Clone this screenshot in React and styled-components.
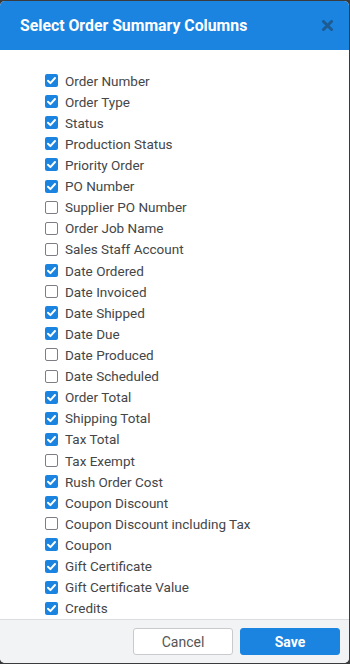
import React, { useState } from "react";
import styled, { createGlobalStyle } from "styled-components";

const colors = {
  backdrop: "#3a3b3c",
  primary: "#1a84e0",
  closeIcon: "#1d5b93",
  text: "#444648",
  border: "#7d7d85",
  footer: "#f2f3f5",
  line: "#dcdde0",
};

const columns = [
  ["Order Number", true],
  ["Order Type", true],
  ["Status", true],
  ["Production Status", true],
  ["Priority Order", true],
  ["PO Number", true],
  ["Supplier PO Number", false],
  ["Order Job Name", false],
  ["Sales Staff Account", false],
  ["Date Ordered", true],
  ["Date Invoiced", false],
  ["Date Shipped", true],
  ["Date Due", true],
  ["Date Produced", false],
  ["Date Scheduled", false],
  ["Order Total", true],
  ["Shipping Total", true],
  ["Tax Total", true],
  ["Tax Exempt", false],
  ["Rush Order Cost", true],
  ["Coupon Discount", true],
  ["Coupon Discount including Tax", false],
  ["Coupon", true],
  ["Gift Certificate", true],
  ["Gift Certificate Value", true],
  ["Credits", true],
];

const GlobalStyle = createGlobalStyle`
  html, body {
    margin: 0;
    padding: 0;
    background: ${colors.backdrop};
    font-family: Roboto, "Liberation Sans", sans-serif;
  }
`;

const App = () => {
  const [checked, setChecked] = useState(columns.map(([, on]) => on));

  const toggle = (i) =>
    setChecked((prev) => prev.map((v, j) => (j === i ? !v : v)));

  return (
    <>
      <GlobalStyle />
      <Modal>
        <Header>
          <Title>Select Order Summary Columns</Title>
          <CloseButton aria-label="Close">
            <svg width="11" height="11" viewBox="0 0 11 11">
              <path
                d="M1.5 1.5 L9.5 9.5 M9.5 1.5 L1.5 9.5"
                stroke={colors.closeIcon}
                strokeWidth="3"
                strokeLinecap="round"
              />
            </svg>
          </CloseButton>
        </Header>
        <Body>
          <List>
            {columns.map(([label], i) => (
              <Row key={label} onClick={() => toggle(i)}>
                <Box $on={checked[i]}>
                  {checked[i] && (
                    <svg width="13" height="13" viewBox="0 0 13 13">
                      <path
                        d="M3 6.8 L5.4 9.1 L10 4"
                        fill="none"
                        stroke="#fff"
                        strokeWidth="2"
                        strokeLinecap="round"
                        strokeLinejoin="round"
                      />
                    </svg>
                  )}
                </Box>
                <Label>{label}</Label>
              </Row>
            ))}
          </List>
        </Body>
        <Footer>
          <Button>Cancel</Button>
          <Button $primary>Save</Button>
        </Footer>
      </Modal>
    </>
  );
};

export default App;

const Modal = styled.div`
  margin-top: 1px;
  width: 349px;
  height: 662px;
  background: #fff;
  border-radius: 5px;
  overflow: hidden;
  display: flex;
  flex-direction: column;
`;

const Header = styled.div`
  flex: 0 0 49px;
  background: ${colors.primary};
  display: flex;
  align-items: center;
  justify-content: space-between;
  padding: 0 16px 0 20px;
`;

const Title = styled.h1`
  margin: 0;
  color: #fff;
  font-size: 15.8px;
  font-weight: 700;
`;

const CloseButton = styled.button`
  appearance: none;
  border: none;
  background: none;
  padding: 0;
  display: flex;
  cursor: pointer;
`;

const Body = styled.div`
  flex: 1;
  overflow: hidden;
  padding: 20px 0 0 45px;
`;

const List = styled.div`
  display: flex;
  flex-direction: column;
`;

const Row = styled.label`
  height: 21.12px;
  display: flex;
  align-items: center;
  gap: 7px;
  cursor: pointer;
`;

const Box = styled.span`
  box-sizing: border-box;
  flex: 0 0 13px;
  width: 13px;
  height: 13px;
  border-radius: 2px;
  display: flex;
  background: ${(p) => (p.$on ? colors.primary : "#fff")};
  border: ${(p) => (p.$on ? "none" : `1.5px solid ${colors.border}`)};
`;

const Label = styled.span`
  font-size: 13.5px;
  color: ${colors.text};
`;

const Footer = styled.div`
  flex: 0 0 44px;
  box-sizing: border-box;
  background: ${colors.footer};
  border-top: 1px solid ${colors.line};
  display: flex;
  justify-content: flex-end;
  align-items: flex-start;
  gap: 7px;
  padding: 8px 9px 0 0;
`;

const Button = styled.button`
  appearance: none;
  box-sizing: border-box;
  width: 100px;
  height: 27px;
  border-radius: 3px;
  font-family: Roboto, "Liberation Sans", sans-serif;
  font-size: 14px;
  cursor: pointer;
  border: 1px solid ${(p) => (p.$primary ? colors.primary : "#c9cacd")};
  background: ${(p) => (p.$primary ? colors.primary : "#fff")};
  color: ${(p) => (p.$primary ? "#fff" : "#555")};
  font-weight: ${(p) => (p.$primary ? 700 : 400)};
`;
